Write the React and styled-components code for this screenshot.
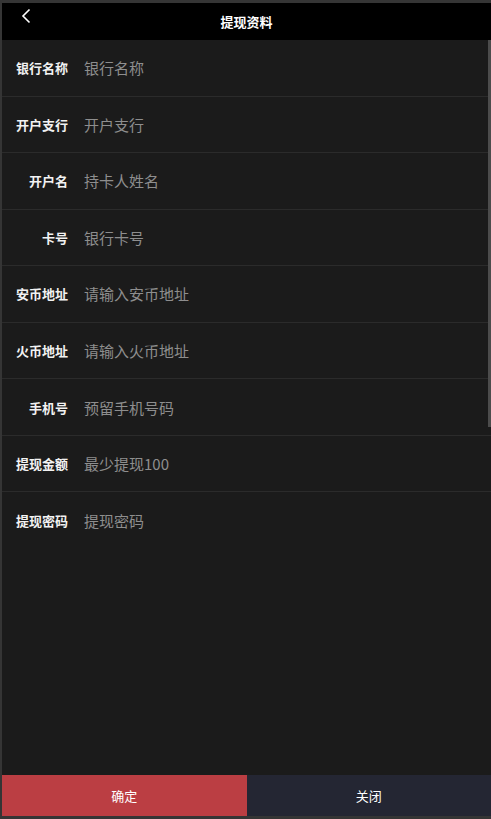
import React from 'react';
import styled, { createGlobalStyle } from 'styled-components';

const GlobalStyle = createGlobalStyle`
  html, body {
    margin: 0;
    padding: 0;
    background: #353535;
  }
  body {
    font-family: "Noto Sans CJK SC", "Noto Sans", sans-serif;
  }
  * { box-sizing: border-box; }
`;

const Frame = styled.div`
  height: 819px;
  padding: 3px 0 3px 2px;
  display: flex;
  flex-direction: column;
`;

const Header = styled.header`
  position: relative;
  height: 37px;
  flex: none;
  background: #000;
  display: flex;
  align-items: center;
  justify-content: center;
`;

const BackButton = styled.button`
  position: absolute;
  left: 14px;
  top: 2px;
  width: 20px;
  height: 22px;
  padding: 0;
  border: none;
  background: none;
  display: flex;
  align-items: center;
  justify-content: center;
  cursor: pointer;
`;

const Title = styled.h1`
  margin: 0;
  font-size: 13px;
  font-weight: 700;
  color: #fff;
  line-height: 1;
`;

const Body = styled.div`
  position: relative;
  flex: 1;
  background: #1b1b1b;
`;

const ScrollThumb = styled.div`
  position: absolute;
  right: 0;
  top: 0;
  width: 3px;
  height: 387px;
  background: #4c4c4c;
`;

const Row = styled.label`
  height: 56.55px;
  display: flex;
  align-items: center;
  border-bottom: 1px solid #2b2b2b;
`;

const Label = styled.span`
  width: 66px;
  flex: none;
  text-align: right;
  font-size: 13px;
  font-weight: 700;
  color: #f2f2f2;
`;

const Input = styled.input`
  flex: 1;
  margin-left: 16px;
  margin-right: 20px;
  border: none;
  outline: none;
  background: transparent;
  font-family: inherit;
  font-size: 15px;
  color: #ddd;
  padding: 0;

  &::placeholder {
    color: #8e8e8e;
  }
`;

const Footer = styled.div`
  height: 41px;
  flex: none;
  display: flex;
`;

const FooterButton = styled.button`
  flex: 1;
  border: none;
  margin: 0;
  font-family: inherit;
  font-size: 13px;
  color: #fff;
  background: ${p => (p.primary ? '#bb3e43' : '#242633')};
  cursor: pointer;
`;

const fields = [
  { label: '银行名称', placeholder: '银行名称' },
  { label: '开户支行', placeholder: '开户支行' },
  { label: '开户名', placeholder: '持卡人姓名' },
  { label: '卡号', placeholder: '银行卡号' },
  { label: '安币地址', placeholder: '请输入安币地址' },
  { label: '火币地址', placeholder: '请输入火币地址' },
  { label: '手机号', placeholder: '预留手机号码' },
  { label: '提现金额', placeholder: '最少提现100' },
  { label: '提现密码', placeholder: '提现密码', type: 'password', last: true },
];

export default function App() {
  return (
    <>
      <GlobalStyle />
      <Frame>
        <Header>
          <BackButton aria-label="返回">
            <svg width="12" height="16" viewBox="0 0 12 16">
              <path d="M9.5 1.5 L3 8 L9.5 14.5" fill="none" stroke="#fff" strokeWidth="1.6" />
            </svg>
          </BackButton>
          <Title>提现资料</Title>
        </Header>
        <Body>
          {fields.map(f => (
            <Row key={f.label} style={f.last ? { borderBottom: 'none' } : undefined}>
              <Label>{f.label}</Label>
              <Input type={f.type || 'text'} placeholder={f.placeholder} />
            </Row>
          ))}
          <ScrollThumb />
        </Body>
        <Footer>
          <FooterButton primary>确定</FooterButton>
          <FooterButton>关闭</FooterButton>
        </Footer>
      </Frame>
    </>
  );
}
